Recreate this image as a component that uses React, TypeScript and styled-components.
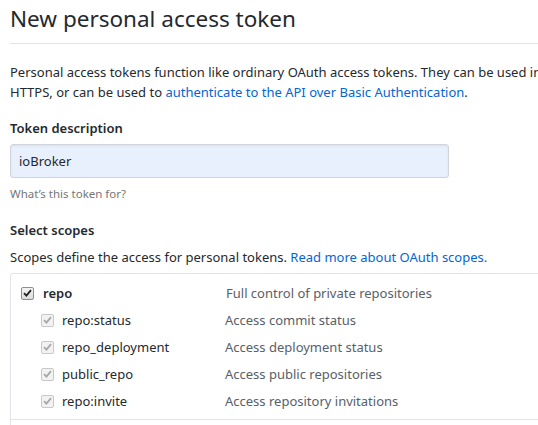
import styled, { createGlobalStyle } from "styled-components";

const GlobalStyle = createGlobalStyle`
  body {
    margin: 0;
    background: #fff;
    overflow: hidden;
    font-family: "Noto Sans", "Open Sans", sans-serif;
    font-size: 13px;
    line-height: 20px;
    color: #24292e;
  }
`;

const Page = styled.div`
  width: 1000px;
  padding: 4px 0 0 10px;
`;

const Subhead = styled.div`
  padding-bottom: 9px;
  border-bottom: 1px solid #e1e4e8;
`;

const Heading = styled.h2`
  margin: 0;
  font-size: 22.5px;
  font-weight: 400;
  line-height: 30px;
`;

const Lead = styled.p`
  margin: 18px 0 0;
`;

const Link = styled.a`
  color: #0366d6;
  text-decoration: none;
`;

const Label = styled.label<{ $gap: number }>`
  display: block;
  margin-top: ${({ $gap }) => $gap}px;
  font-weight: 600;
`;

const TextInput = styled.input`
  display: block;
  box-sizing: border-box;
  width: 439px;
  height: 34px;
  margin-top: 6px;
  padding: 0 8px;
  font-family: inherit;
  font-size: 13px;
  color: #24292e;
  background: #e8f0fe;
  border: 1px solid #d1d5da;
  border-radius: 3px;
  box-shadow: inset 0 1px 2px rgba(27, 31, 35, 0.075);
  outline: none;
`;

const Note = styled.p`
  margin: 7px 0 0;
  font-size: 11.5px;
  line-height: 18px;
  color: #767676;
`;

const Hint = styled.p`
  margin: 7.5px 0 0;
`;

const ScopeBox = styled.div`
  margin-top: 6px;
  border: 1px solid #e1e4e8;
  border-radius: 3px;
  height: 300px;
`;

const ScopeGroup = styled.div`
  padding: 5.5px 0 4.5px 10px;
  border-bottom: 1px solid #e1e4e8;
`;

const Row = styled.div<{ $sub?: boolean }>`
  display: flex;
  align-items: center;
  height: 27px;
  line-height: 27px;
  padding-left: ${({ $sub }) => ($sub ? 20 : 0)}px;
`;

const Name = styled.span<{ $sub?: boolean }>`
  width: ${({ $sub }) => ($sub ? 163 : 183)}px;
  font-weight: ${({ $sub }) => ($sub ? 400 : 600)};
`;

const Desc = styled.span`
  color: #586069;
`;

const Box = styled.span<{ $disabled?: boolean }>`
  box-sizing: border-box;
  width: 13px;
  height: 13px;
  margin-right: ${({ $disabled }) => ($disabled ? 8 : 9)}px;
  display: inline-flex;
  align-items: center;
  justify-content: center;
  border: 1px solid ${({ $disabled }) => ($disabled ? "#c8c8c8" : "#8e8e8e")};
  border-radius: 2px;
  background: ${({ $disabled }) =>
    $disabled ? "#f2f2f2" : "linear-gradient(#f4f4f4, #dcdcdc)"};
  color: ${({ $disabled }) => ($disabled ? "#a8a8a8" : "#222")};
`;

function Check({ disabled }: { disabled?: boolean }) {
  return (
    <Box $disabled={disabled}>
      <svg width="9" height="8" viewBox="0 0 9 8">
        <path d="M1 4.2 L3.4 6.6 L8 1.2" fill="none" stroke="currentColor" strokeWidth="1.8" />
      </svg>
    </Box>
  );
}

const subScopes = [
  ["repo:status", "Access commit status"],
  ["repo_deployment", "Access deployment status"],
  ["public_repo", "Access public repositories"],
  ["repo:invite", "Access repository invitations"],
];

export default function App() {
  return (
    <Page>
      <GlobalStyle />
      <Subhead>
        <Heading>New personal access token</Heading>
      </Subhead>
      <Lead>
        Personal access tokens function like ordinary OAuth access tokens. They can be used
        instead of a password for Git over
        <br />
        HTTPS, or can be used to{" "}
        <Link href="#">authenticate to the API over Basic Authentication</Link>.
      </Lead>
      <Label $gap={16}>Token description</Label>
      <TextInput defaultValue="ioBroker" />
      <Note>What’s this token for?</Note>
      <Label $gap={16.5}>Select scopes</Label>
      <Hint>
        Scopes define the access for personal tokens.{" "}
        <Link href="#">Read more about OAuth scopes.</Link>
      </Hint>
      <ScopeBox>
        <ScopeGroup>
          <Row>
            <Check />
            <Name>repo</Name>
            <Desc>Full control of private repositories</Desc>
          </Row>
          {subScopes.map(([name, desc]) => (
            <Row $sub key={name}>
              <Check disabled />
              <Name $sub>{name}</Name>
              <Desc>{desc}</Desc>
            </Row>
          ))}
        </ScopeGroup>
      </ScopeBox>
    </Page>
  );
}
